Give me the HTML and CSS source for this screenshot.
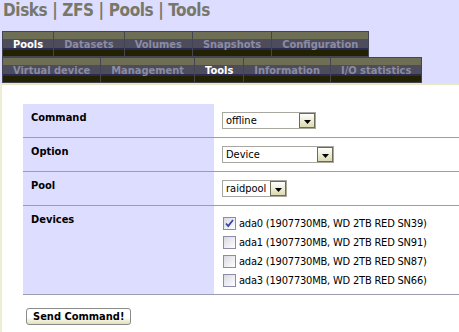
FILE: index.html
```html
<!DOCTYPE html>
<html lang="en">
<head>
    <meta charset="UTF-8">
    <meta name="viewport" content="width=device-width, initial-scale=1.0">
    <title>Disks | ZFS | Pools | Tools</title>
    <link rel="stylesheet" href="styles.css">
</head>
<body>

<h1 class="title">Disks | ZFS | Pools | Tools</h1>

<div class="tabs">
    <ul class="tabrow">
        <li class="active">Pools</li>
        <li>Datasets</li>
        <li>Volumes</li>
        <li>Snapshots</li>
        <li>Configuration</li>
    </ul>
    <ul class="tabrow">
        <li>Virtual device</li>
        <li>Management</li>
        <li class="active">Tools</li>
        <li>Information</li>
        <li>I/O statistics</li>
    </ul>
</div>

<div class="content">
    <table class="formtable">
        <tr>
            <td class="label">Command</td>
            <td class="value">
                <div class="select sel-cmd">
                    <span class="sel-text">offline</span>
                    <span class="sel-btn"><svg width="7" height="4" viewBox="0 0 7 4"><path d="M0 0h7L3.5 4z" fill="#000"/></svg></span>
                </div>
            </td>
        </tr>
        <tr>
            <td class="label">Option</td>
            <td class="value">
                <div class="select sel-opt">
                    <span class="sel-text">Device</span>
                    <span class="sel-btn"><svg width="7" height="4" viewBox="0 0 7 4"><path d="M0 0h7L3.5 4z" fill="#000"/></svg></span>
                </div>
            </td>
        </tr>
        <tr>
            <td class="label">Pool</td>
            <td class="value">
                <div class="select sel-pool">
                    <span class="sel-text">raidpool</span>
                    <span class="sel-btn"><svg width="7" height="4" viewBox="0 0 7 4"><path d="M0 0h7L3.5 4z" fill="#000"/></svg></span>
                </div>
            </td>
        </tr>
        <tr>
            <td class="label">Devices</td>
            <td class="value devices">
                <div class="device">
                    <span class="check checked"><svg width="9" height="9" viewBox="0 0 9 9"><path d="M1 4.5l2.2 2.5L8 1" fill="none" stroke="#3044a8" stroke-width="1.8"/></svg></span>
                    <span>ada0 (1907730MB, WD 2TB RED SN39)</span>
                </div>
                <div class="device">
                    <span class="check"></span>
                    <span>ada1 (1907730MB, WD 2TB RED SN91)</span>
                </div>
                <div class="device">
                    <span class="check"></span>
                    <span>ada2 (1907730MB, WD 2TB RED SN87)</span>
                </div>
                <div class="device">
                    <span class="check"></span>
                    <span>ada3 (1907730MB, WD 2TB RED SN66)</span>
                </div>
            </td>
        </tr>
    </table>

    <button class="send">Send Command!</button>
</div>

</body>
</html>
```

FILE: styles.css
```css
body {
    margin: 0;
    background-color: #ddddff;
    font-family: "DejaVu Sans Condensed", "DejaVu Sans", sans-serif;
    font-stretch: condensed;
    font-size: 11px;
    overflow: hidden;
}
.title {
    margin: 0 0 11px 3px;
    font-size: 17px;
    line-height: 20px;
    letter-spacing: -0.4px;
    font-weight: bold;
    color: #77776a;
}
.tabrow {
    list-style: none;
    display: flex;
    width: max-content;
    margin: 0 0 0 2px;
    padding: 0;
}
.tabrow li {
    height: 26px;
    box-sizing: border-box;
    padding: 6px 10px 0;
    margin-left: -1px;
    border: 1px solid #444452;
    line-height: 13px;
    font-weight: bold;
    color: #8b8ba3;
    background: linear-gradient(to bottom, #6e6e55 0 7px, #4c4c5c 7px 16px, #2a2a55 16px 18px, #222200 18px);
}
.tabrow li:first-child {
    margin-left: 0;
}
.tabrow li.active {
    color: #fff;
}
.content {
    min-height: 210px;
    background: #fff;
    border-top: 2px solid #e8e8c4;
    border-left: 2px solid #eeeed4;
    padding: 19px 0 10px 21px;
}
.formtable {
    width: 100%;
    border-collapse: collapse;
}
.formtable td {
    border-bottom: 1px solid #9c9cb0;
    vertical-align: top;
}
.label {
    width: 175px;
    padding: 7px 8px;
    background: #ddddff;
    font-weight: bold;
    line-height: 13px;
}
.value {
    padding: 8px;
}
.value.devices {
    padding-bottom: 4px;
}
.select {
    display: flex;
    align-items: center;
    height: 17px;
    box-sizing: border-box;
    border: 1px solid #a8a8a0;
    background: #fff;
}
.sel-cmd { width: 94px; }
.sel-opt { width: 112px; }
.sel-pool { width: 65px; }
.sel-text {
    padding-left: 3px;
    flex: 1;
}
.sel-btn {
    display: flex;
    align-items: center;
    justify-content: center;
    width: 16px;
    height: 15px;
    box-sizing: border-box;
    padding-top: 2px;
    border: 1px solid #6b6b58;
    background: linear-gradient(to bottom, #fff, #dcdab0);
}
.device {
    display: flex;
    align-items: center;
    height: 19px;
    line-height: 13px;
    letter-spacing: -0.2px;
}
.check {
    display: flex;
    align-items: center;
    justify-content: center;
    width: 13px;
    height: 13px;
    box-sizing: border-box;
    margin: 0 3px 0 1px;
    border: 1px solid #8c8ca8;
    background: linear-gradient(135deg, #d8d8e2, #fff);
}
.send {
    display: block;
    margin: 13px 0 0 3px;
    height: 17px;
    padding: 0 6px;
    border: 1px solid #8a8a8a;
    border-radius: 3px;
    background: linear-gradient(to bottom, #fff 55%, #e2e2b4);
    font-family: inherit;
    font-stretch: condensed;
    font-size: 11px;
    font-weight: bold;
    line-height: 13px;
    color: #000;
}
```
